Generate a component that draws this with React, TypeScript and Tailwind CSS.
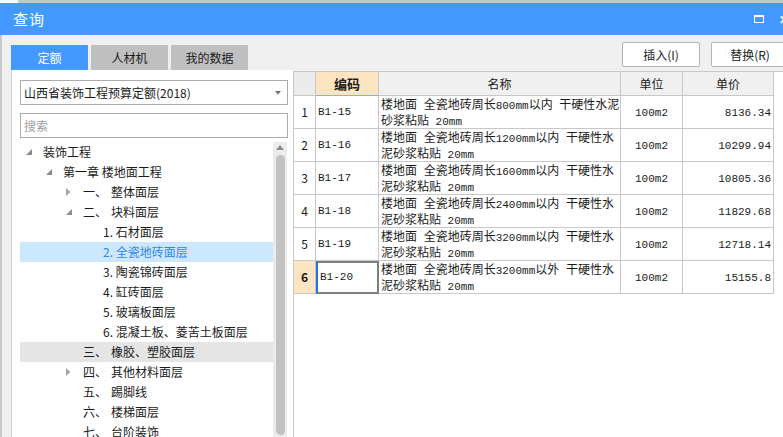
import React from 'react';

const tree = [
  { lv: 0, arrow: 'open', text: '装饰工程' },
  { lv: 1, arrow: 'open', text: '第一章 楼地面工程' },
  { lv: 2, arrow: 'closed', num: '一、', text: '整体面层' },
  { lv: 2, arrow: 'open', num: '二、', text: '块料面层' },
  { lv: 3, text: '1. 石材面层' },
  { lv: 3, text: '2. 全瓷地砖面层', sel: true },
  { lv: 3, text: '3. 陶瓷锦砖面层' },
  { lv: 3, text: '4. 缸砖面层' },
  { lv: 3, text: '5. 玻璃板面层' },
  { lv: 3, text: '6. 混凝土板、菱苦土板面层' },
  { lv: 2, num: '三、', text: '橡胶、塑胶面层', hover: true },
  { lv: 2, arrow: 'closed', num: '四、', text: '其他材料面层' },
  { lv: 2, num: '五、', text: '踢脚线' },
  { lv: 2, num: '六、', text: '楼梯面层' },
  { lv: 2, num: '七、', text: '台阶装饰' },
];

const indent = ['pl-[6px]', 'pl-[26px]', 'pl-[46px]', 'pl-[66px]'];

const rows = [
  { n: 1, code: 'B1-15', l1: '楼地面 全瓷地砖周长800mm以内 干硬性水泥', l2: '砂浆粘贴 20mm', price: '8136.34' },
  { n: 2, code: 'B1-16', l1: '楼地面 全瓷地砖周长1200mm以内 干硬性水', l2: '泥砂浆粘贴 20mm', price: '10299.94' },
  { n: 3, code: 'B1-17', l1: '楼地面 全瓷地砖周长1600mm以内 干硬性水', l2: '泥砂浆粘贴 20mm', price: '10805.36' },
  { n: 4, code: 'B1-18', l1: '楼地面 全瓷地砖周长2400mm以内 干硬性水', l2: '泥砂浆粘贴 20mm', price: '11829.68' },
  { n: 5, code: 'B1-19', l1: '楼地面 全瓷地砖周长3200mm以内 干硬性水', l2: '泥砂浆粘贴 20mm', price: '12718.14' },
  { n: 6, code: 'B1-20', l1: '楼地面 全瓷地砖周长3200mm以外 干硬性水', l2: '泥砂浆粘贴 20mm', price: '15155.8' },
];

// latin runs are narrower in the grid's font
const Mixed = ({ text }: { text: string }) => (
  <>
    {text.split(/([\x20-\x7e]+)/).map((part, i) =>
      /[\x20-\x7e]/.test(part) ? (
        <span key={i} className="font-['Liberation_Mono',monospace] text-[11px] leading-[12px] whitespace-pre">
          {part}
        </span>
      ) : (
        <span key={i}>{part}</span>
      )
    )}
  </>
);

const Arrow = ({ kind }: { kind?: string }) => {
  if (kind === 'open')
    return (
      <svg width="7" height="7" viewBox="0 0 7 7">
        <polygon points="6,0 6,6 0,6" fill="#8a8a8a" />
      </svg>
    );
  if (kind === 'closed')
    return (
      <svg width="5" height="8" viewBox="0 0 5 8">
        <polygon points="0,0 4.5,4 0,8" fill="#a6a6a6" />
      </svg>
    );
  return null;
};

const App = () => {
  return (
    <div className="w-[783px] h-[437px] overflow-hidden bg-[#f0f0f0] font-['Noto_Sans_CJK_SC',sans-serif] text-[12px] text-[#1b1b1b] flex flex-col">
      <div className="h-[3px] shrink-0 bg-[#c6c6c6] flex">
        <div className="w-[18px] bg-white" />
      </div>
      <div className="h-[32px] shrink-0 bg-[#4499ff] flex items-center justify-between pl-[13px] text-white">
        <span className="text-[15px] tracking-[1px]">查询</span>
        <div className="flex items-center gap-[15px] -mr-[6px]">
          <div className="w-[10px] h-[8px] border border-white border-t-2" />
          <span className="text-[12px] font-bold">✕</span>
        </div>
      </div>
      <div className="flex-1 flex border-l-2 border-[#c9c9c9] min-h-0">
        <div className="w-[282px] ml-[9px] flex flex-col pt-[10px]">
          <div className="flex gap-[3px] h-[25px] shrink-0">
            <div className="w-[77px] bg-[#4499ff] text-white flex items-center justify-center">定额</div>
            <div className="w-[77px] bg-[#c0c0c0] flex items-center justify-center">人材机</div>
            <div className="w-[77px] bg-[#c0c0c0] flex items-center justify-center">我的数据</div>
          </div>
          <div className="flex-1 bg-white border-l border-[#cfcfcf] pl-[8px] pr-[5px] pt-[10px] flex flex-col min-h-0">
            <div className="h-[25px] shrink-0 border border-[#acacac] flex items-center justify-between pl-[3px] pr-[6px] text-[12px]">
              <span>山西省装饰工程预算定额(2018)</span>
              <svg width="6" height="4" viewBox="0 0 6 4">
                <polygon points="0,0 6,0 3,3.5" fill="#707070" />
              </svg>
            </div>
            <div className="h-[25px] mt-[8px] shrink-0 border border-[#acacac] flex items-center pl-[3px] text-[#a0a0a0]">
              搜索
            </div>
            <div className="flex mt-[4px] flex-1 min-h-0">
              <div className="w-[253px]">
                {tree.map((t, i) => (
                  <div
                    key={i}
                    className={`h-[20px] flex items-center ${indent[t.lv]} ${
                      t.sel ? 'bg-[#cce8ff] text-[#2f86e6]' : t.hover ? 'bg-[#e5e5e5]' : ''
                    }`}
                  >
                    <span className="w-[17px] flex items-center">
                      <Arrow kind={t.arrow} />
                    </span>
                    {t.num && <span className="w-[28px]">{t.num}</span>}
                    <span className="whitespace-nowrap">{t.text}</span>
                  </div>
                ))}
              </div>
              <div className="w-[14px] bg-[#ececec] flex flex-col items-center pt-[3px]">
                <svg width="8" height="5" viewBox="0 0 8 5">
                  <polygon points="0,5 8,5 4,0" fill="#8c8c8c" />
                </svg>
                <div className="mt-[5px] w-[9px] flex-1 rounded-full bg-[#c2c2c2] mb-[2px]" />
              </div>
            </div>
          </div>
        </div>
        <div className="flex-1 flex flex-col pt-[7px] min-w-0">
          <div className="flex justify-end gap-[11px] -mr-[6px] h-[25px] shrink-0">
            <div className="w-[78px] bg-white border border-[#b4b4b4] rounded-[2px] flex items-center justify-center">
              插入(I)
            </div>
            <div className="w-[78px] bg-white border border-[#b4b4b4] rounded-[2px] flex items-center justify-center">
              替换(R)
            </div>
          </div>
          <div className="mt-[4px] flex-1 bg-white border-l border-t border-[#c8c8c8]">
            <div className="grid grid-cols-[22px_63px_242px_62px_91px] h-[24px]">
              <div className="bg-[#ececec] border-r border-b border-[#c8c8c8]" />
              <div className="bg-[#fde5c4] border-r border-r-[#c8c8c8] border-b border-b-[#7db4f0] flex items-center justify-center font-bold text-[13px]">
                编码
              </div>
              <div className="bg-[#f0f0f0] border-r border-b border-[#c8c8c8] flex items-center justify-center">名称</div>
              <div className="bg-[#f0f0f0] border-r border-b border-[#c8c8c8] flex items-center justify-center">单位</div>
              <div className="bg-[#f0f0f0] border-r border-b border-[#c8c8c8] flex items-center justify-center">单价</div>
            </div>
            {rows.map((r) => {
              const cur = r.n === 6;
              return (
                <div key={r.n} className="grid grid-cols-[22px_63px_242px_62px_91px] h-[33px]">
                  <div
                    className={`border-r border-b border-[#c8c8c8] flex items-center justify-center ${
                      cur ? 'bg-[#fde5c4] font-bold' : ''
                    }`}
                  >
                    {r.n}
                  </div>
                  <div
                    className={`flex items-center pl-[2px] font-['Liberation_Mono',monospace] text-[11px] ${
                      cur
                        ? 'border-2 border-[#7f7f7f] border-l-[#1e74ec]'
                        : 'border-r border-b border-[#c8c8c8]'
                    }`}
                  >
                    {r.code}
                  </div>
                  <div className="border-r border-b border-[#c8c8c8] pl-[2px] overflow-hidden whitespace-nowrap">
                    <div className="h-[16px] leading-[16px]">
                      <Mixed text={r.l1} />
                    </div>
                    <div className="h-[16px] leading-[16px]">
                      <Mixed text={r.l2} />
                    </div>
                  </div>
                  <div className="border-r border-b border-[#c8c8c8] flex items-center justify-center pt-[2px]">
                    <Mixed text="100m2" />
                  </div>
                  <div className="border-r border-b border-[#c8c8c8] flex items-center justify-end pr-[2px] pt-[2px] font-['Liberation_Mono',monospace] text-[11px]">
                    {r.price}
                  </div>
                </div>
              );
            })}
          </div>
        </div>
      </div>
    </div>
  );
};

export default App;
